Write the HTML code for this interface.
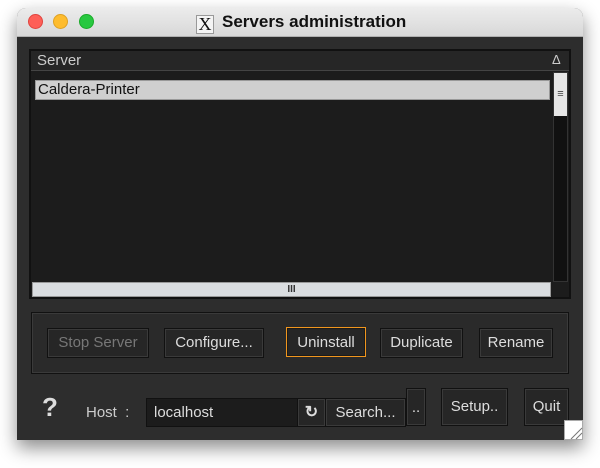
<!DOCTYPE html>
<html><head><style>
*{box-sizing:border-box;margin:0;padding:0}
body{width:600px;height:468px;background:#fff;position:relative;overflow:hidden;font-family:"Liberation Sans",sans-serif}
.win{position:absolute;left:17px;top:8px;width:566px;height:432px;border-radius:9px 9px 0 0;background:#2d2d2d;box-shadow:0 8px 18px rgba(0,0,0,.45);overflow:hidden}
.tb{position:absolute;left:0;top:0;width:566px;height:29px;background:linear-gradient(#ececec,#d8d8d8);border-bottom:1px solid #b0b0b0}
.dot{position:absolute;top:6px;width:15px;height:15px;border-radius:50%}
.title{position:absolute;left:179px;top:4px;font-weight:bold;font-size:17px;color:#111}
.xi{display:inline-block;width:18px;height:19px;border:1px solid #999;background:#f4f4f4;font-family:"Liberation Serif",serif;font-size:18px;line-height:17px;text-align:center;margin-right:8px;vertical-align:-3px;font-weight:normal}
.a{position:absolute}
.btn{position:absolute;height:30px;background:#262626;border:1px solid #111;box-shadow:inset 0 0 0 1px #3a3a3a;color:#ddd;font-size:15px;text-align:center;line-height:28px}
</style></head><body>
<div class="win">
<div class="tb">
<div class="dot" style="left:11px;background:#fe5f57;border:1px solid #e0443e"></div>
<div class="dot" style="left:36px;background:#febc2e;border:1px solid #dea123"></div>
<div class="dot" style="left:62px;background:#28c840;border:1px solid #1aab29"></div>
<div class="title"><span class="xi">X</span>Servers administration</div>
</div>
<div class="a" style="left:12px;top:41px;width:542px;height:250px;background:#1c1c1c;border:2px solid #111"></div>
<div class="a" style="left:14px;top:43px;width:538px;height:20px;background:#262626;border-bottom:1px solid #444;color:#ccc;font-size:15px;padding-left:6px;line-height:19px">Server</div>
<div class="a" style="left:535px;top:44px;width:14px;height:16px;color:#ccc;font-size:13px;line-height:16px">&#916;</div>
<div class="a" style="left:18px;top:72px;width:515px;height:20px;background:#cfcfcf;border:1px solid #999;color:#111;font-size:15px;line-height:18px;padding-left:2px">Caldera-Printer</div>
<div class="a" style="left:536px;top:64px;width:15px;height:210px;background:#111;border:1px solid #333"></div>
<div class="a" style="left:537px;top:65px;width:13px;height:43px;background:#e6e6e6;color:#444;font-size:11px;text-align:center;line-height:43px">&#8801;</div>
<div class="a" style="left:15px;top:274px;width:519px;height:15px;background:#dadde0;border:1px solid #999;color:#333;font-size:10px;text-align:center;line-height:13px;font-weight:bold">III</div>
<div class="a" style="left:14px;top:304px;width:538px;height:62px;border:1px solid #111;box-shadow:inset 0 0 0 1px #3a3a3a;background:#2a2a2a"></div>
<div class="btn" style="left:30px;top:320px;width:102px;color:#777">Stop Server</div>
<div class="btn" style="left:147px;top:320px;width:100px">Configure...</div>
<div class="btn" style="left:269px;top:319px;width:80px;border:1px solid #f0961e;box-shadow:inset 0 0 0 1px #1a1a1a;line-height:30px">Uninstall</div>
<div class="btn" style="left:363px;top:320px;width:83px">Duplicate</div>
<div class="btn" style="left:462px;top:320px;width:74px">Rename</div>
<div class="a" style="left:25px;top:384px;color:#ddd;font-size:26px;font-weight:bold">?</div>
<div class="a" style="left:69px;top:396px;color:#ccc;font-size:15px">Host&nbsp;&nbsp;:</div>
<div class="btn" style="left:389px;top:380px;width:20px;height:38px;line-height:38px">..</div>
<div class="a" style="left:129px;top:390px;width:152px;height:29px;background:#1c1c1c;border:1px solid #111;color:#ddd;font-size:15px;line-height:27px;padding-left:7px">localhost</div>
<div class="btn" style="left:280px;top:390px;width:29px;height:29px;font-size:16px;line-height:27px;font-weight:bold">&#8635;</div>
<div class="btn" style="left:308px;top:390px;width:81px;height:29px;line-height:27px">Search...</div>
<div class="btn" style="left:424px;top:380px;width:67px;height:38px;line-height:36px">Setup..</div>
<div class="btn" style="left:507px;top:380px;width:45px;height:38px;line-height:36px">Quit</div>
<div class="a" style="left:547px;top:412px;width:19px;height:20px;background:#fff;border:1px solid #aaa"><svg width="19" height="20"><path d="M6 18L17 7M11 18L17 12" stroke="#777" stroke-width="1"/></svg></div>
</div>
</body></html>
